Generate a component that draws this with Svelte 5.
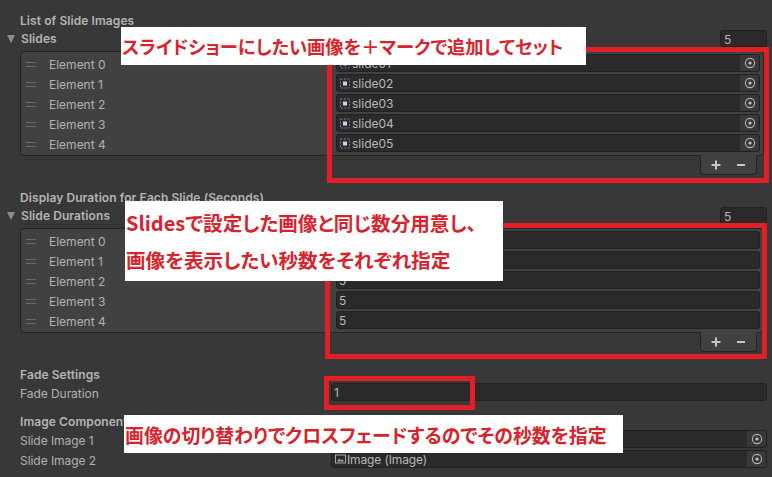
<script>
  const slides = ['slide01', 'slide02', 'slide03', 'slide04', 'slide05'];
  const durations = ['5', '5', '5', '5', '5'];
</script>

{#snippet pick()}
  <span class="pick">
    <svg width="12" height="12" viewBox="0 0 12 12"><circle cx="6" cy="6" r="4.6" fill="none" stroke="#b4b4b4" stroke-width="1.1" /><circle cx="6" cy="6" r="1.6" fill="#c4c4c4" /></svg>
  </span>
{/snippet}

{#snippet spriteIcon()}
  <svg class="ico" width="10" height="11" viewBox="0 0 10 11">
    <rect x="0.5" y="1" width="9" height="9" fill="none" stroke="#7d72ad" stroke-width="1" stroke-dasharray="2 1.5" />
    <rect x="3" y="3.5" width="4" height="4" fill="#d6d6d6" />
  </svg>
{/snippet}

{#snippet imageIcon()}
  <svg class="ico img" width="11" height="10" viewBox="0 0 11 10"><rect x="0.5" y="1" width="10" height="8" fill="none" stroke="#a8a8a8" /><path d="M2 7.5l2.2-3 1.8 2 1.5-1.3 1.5 2.3z" fill="#a8a8a8" /></svg>
{/snippet}

{#snippet footer()}
  <div class="footer">
    <div class="addrem">
      <svg width="12" height="12" viewBox="0 0 12 12"><path d="M6 1.5v9M1.5 6h9" stroke="#c8c8c8" stroke-width="2" /></svg>
      <svg width="12" height="12" viewBox="0 0 12 12"><path d="M2 6h8" stroke="#c8c8c8" stroke-width="2" /></svg>
    </div>
  </div>
{/snippet}

<div class="root">
  <div class="section first">
    <div class="heading">List of Slide Images</div>
    <div class="foldout">
      <span class="tri"></span><span class="foldname">Slides</span>
      <span class="count">5</span>
    </div>
    <div class="list">
      {#each slides as s, i}
        <div class="row">
          <span class="handle"></span>
          <span class="el">Element {i}</span>
          <span class="field obj">{@render spriteIcon()}<span class="val">{s}</span>{@render pick()}</span>
        </div>
      {/each}
    </div>
    {@render footer()}
  </div>

  <div class="section second">
    <div class="heading">Display Duration for Each Slide (Seconds)</div>
    <div class="foldout">
      <span class="tri"></span><span class="foldname">Slide Durations</span>
      <span class="count">5</span>
    </div>
    <div class="list">
      {#each durations as d, i}
        <div class="row">
          <span class="handle"></span>
          <span class="el">Element {i}</span>
          <span class="field num"><span class="val">{d}</span></span>
        </div>
      {/each}
    </div>
    {@render footer()}
  </div>

  <div class="section third">
    <div class="heading">Fade Settings</div>
    <div class="prop">
      <span class="label">Fade Duration</span>
      <span class="field num wide"><span class="val">1</span></span>
    </div>
  </div>

  <div class="section fourth">
    <div class="heading">Image Components</div>
    <div class="prop">
      <span class="label">Slide Image 1</span>
      <span class="field obj wide">{@render imageIcon()}<span class="val tight">Image (Image)</span>{@render pick()}</span>
    </div>
    <div class="prop">
      <span class="label">Slide Image 2</span>
      <span class="field obj wide">{@render imageIcon()}<span class="val tight">Image (Image)</span>{@render pick()}</span>
    </div>
  </div>

  <div class="frame f1"></div>
  <div class="frame f2"></div>
  <div class="frame f3"></div>

  <div class="note n1">スライドショーにしたい画像を＋マークで追加してセット</div>
  <div class="note n2">
    <div><b>Slides</b>で設定した画像と同じ数分用意し、</div>
    <div>画像を表示したい秒数をそれぞれ指定</div>
  </div>
  <div class="note n3">画像の切り替わりでクロスフェードするのでその秒数を指定</div>
</div>

<style>
  :global(body) {
    margin: 0;
    background: #383838;
  }
  .root {
    position: relative;
    width: 772px;
    height: 477px;
    overflow: hidden;
    background: #383838;
    color: #c4c4c4;
    font-family: Inter, "Liberation Sans", sans-serif;
    font-size: 12px;
    box-sizing: border-box;
    padding-top: 12px;
  }
  .section { display: flex; flex-direction: column; padding-left: 20px; padding-right: 5px; }
  .second { margin-top: 15px; }
  .third { margin-top: 15px; }
  .fourth { margin-top: 11px; }
  .heading {
    height: 18px;
    line-height: 18px;
    font-weight: 600;
    color: #b4b4b4;
    letter-spacing: 0.08px;
  }
  .foldout {
    display: flex;
    align-items: center;
    height: 18px;
    margin-left: -13px;
  }
  .tri {
    width: 0;
    height: 0;
    border-left: 4.5px solid transparent;
    border-right: 4.5px solid transparent;
    border-top: 8px solid #8c8c8c;
    margin-right: 6px;
  }
  .foldname { font-weight: 600; color: #b4b4b4; letter-spacing: 0.08px; margin-top: -1px; }
  .count {
    margin-left: auto;
    margin-top: -2px;
    width: 47px;
    height: 17px;
    line-height: 17px;
    padding-left: 3px;
    box-sizing: border-box;
    background: #2a2a2a;
    border: 1px solid #212121;
    border-radius: 3px;
    color: #b4b4b4;
  }
  .list {
    margin-top: 3px;
    height: 105px;
    box-sizing: border-box;
    padding: 2px 3px 0 0;
    border: 1px solid #242424;
    border-radius: 4px;
    background: #414141;
    display: flex;
    flex-direction: column;
    margin-right: 3px;
  }
  .row {
    height: 20px;
    display: flex;
    align-items: center;
    flex: none;
  }
  .handle {
    width: 10px;
    height: 3px;
    margin-left: 5px;
    border-top: 1px solid #6b6b6b;
    border-bottom: 1px solid #6b6b6b;
    flex: none;
  }
  .el { margin-left: 13px; width: 287px; flex: none; color: #b2b2b2; }
  .field {
    display: flex;
    align-items: center;
    height: 18px;
    box-sizing: border-box;
    background: #2a2a2a;
    border: 1px solid #212121;
    border-radius: 3px;
    flex: 1;
    color: #b8b8b8;
    align-self: flex-start;
  }
  .prop .field { margin-top: -1px; }
  .val { padding-left: 2px; padding-top: 1px; }
  .val.tight { padding-left: 1px; letter-spacing: -0.12px; }
  .ico { margin-left: 3px; flex: none; }
  .pick {
    margin-left: auto;
    width: 19px;
    height: 16px;
    display: flex;
    align-items: center;
    justify-content: center;
    background: #383838;
    border-radius: 0 2px 2px 0;
  }
  .footer {
    height: 18px;
    position: relative;
    margin-right: 3px;
  }
  .addrem {
    position: absolute;
    right: 7px;
    top: -1px;
    width: 57px;
    height: 20px;
    box-sizing: border-box;
    background: #414141;
    border: 1px solid #242424;
    border-top: none;
    border-radius: 0 0 4px 4px;
    display: flex;
    align-items: center;
    justify-content: center;
    gap: 13px;
  }
  .prop {
    display: flex;
    align-items: center;
    height: 18px;
    margin-bottom: 2px;
  }
  .third .prop { margin-bottom: 0; }
  .label { width: 311px; flex: none; color: #b2b2b2; letter-spacing: -0.05px; }
  .frame {
    position: absolute;
    box-sizing: border-box;
    border: 5px solid #e21f26;
  }
  .f1 { left: 327px; top: 47px; width: 442px; height: 136px; }
  .f2 { left: 325px; top: 223px; width: 442px; height: 136px; }
  .f3 { left: 324px; top: 376px; width: 151px; height: 34px; }
  .note {
    position: absolute;
    background: #fff;
    color: #d9232c;
    font-family: "Noto Sans CJK JP", sans-serif;
    font-weight: 700;
    font-feature-settings: "palt";
    font-size: 19px;
    white-space: nowrap;
    box-sizing: border-box;
  }
  .note b { font-weight: 700; font-size: 20px; }
  .n1 { left: 121px; top: 27px; width: 465px; height: 38px; line-height: 38px; padding-left: 1px; font-size: 18.3px; }
  .n2 { left: 125px; top: 201px; width: 378px; height: 80px; padding: 3px 0 0 1px; line-height: 37px; font-size: 19.6px; }
  .n3 { left: 124px; top: 415px; width: 499px; height: 38px; line-height: 39px; padding-left: 1px; font-size: 18.9px; }
</style>
